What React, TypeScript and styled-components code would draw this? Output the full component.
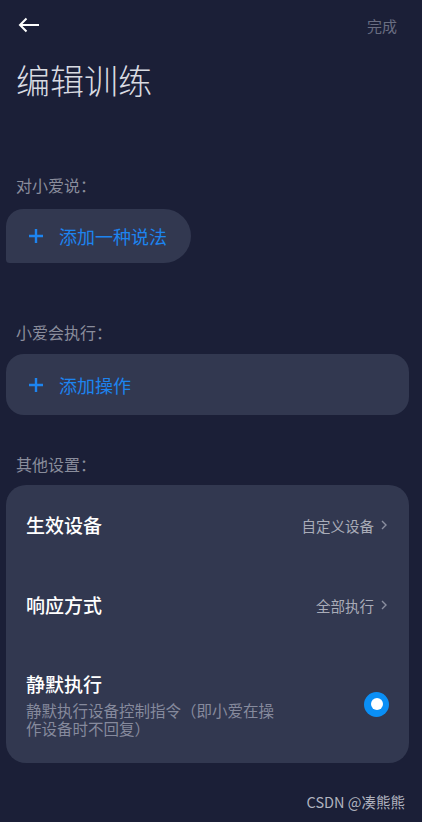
import styled, { createGlobalStyle } from "styled-components";

const GlobalStyle = createGlobalStyle`
    html, body {
        margin: 0;
        padding: 0;
        background: #1b1f37;
    }

    body {
        font-family: "Noto Sans CJK SC", "Noto Sans", "Liberation Sans", sans-serif;
    }
`;

const Page = styled.div`
    width: 422px;
    min-height: 822px;
    background: #1b1f37;
    box-sizing: border-box;
    padding: 0 13px 0 6px;
    display: flex;
    flex-direction: column;
`;

const TopBar = styled.div`
    height: 50px;
    display: flex;
    align-items: center;
    justify-content: space-between;
    padding: 0 12px 0 12px;
`;

const BackButton = styled.button`
    background: none;
    border: none;
    padding: 0;
    width: 24px;
    height: 24px;
    display: flex;
    align-items: center;
    cursor: pointer;
`;

const Done = styled.span`
    font-size: 15px;
    color: #6a6e82;
`;

const Title = styled.h1`
    margin: 8px 0 0 10px;
    font-size: 34px;
    font-weight: 300;
    line-height: 44px;
    color: #d9dbe2;
`;

const SectionLabel = styled.div<{ $top: number }>`
    margin: ${(p) => p.$top}px 0 0 10px;
    font-size: 16px;
    line-height: 22px;
    color: #8a8d9c;
`;

const AddPill = styled.button`
    align-self: flex-start;
    margin-top: 13px;
    height: 54px;
    padding: 0 24px 0 22px;
    display: flex;
    align-items: center;
    gap: 15px;
    background: #323850;
    border: none;
    border-radius: 18px 28px 28px 4px;
    cursor: pointer;
`;

const AddCard = styled.button`
    margin-top: 11px;
    height: 61px;
    padding: 0 22px;
    display: flex;
    align-items: center;
    gap: 15px;
    background: #323850;
    border: none;
    border-radius: 18px;
    cursor: pointer;
`;

const AddText = styled.span`
    font-family: "Noto Sans CJK SC", sans-serif;
    font-size: 18px;
    font-weight: 400;
    color: #1d84ef;
`;

const SettingsCard = styled.div`
    margin-top: 10px;
    background: #323850;
    border-radius: 20px;
    padding: 0 22px 0 20px;
    display: flex;
    flex-direction: column;
`;

const Row = styled.div<{ $height: number }>`
    height: ${(p) => p.$height}px;
    display: flex;
    align-items: center;
    justify-content: space-between;
`;

const RowTitle = styled.div`
    font-size: 19px;
    font-weight: 500;
    color: #ffffff;
    line-height: 24px;
`;

const RowValue = styled.div`
    display: flex;
    align-items: center;
    gap: 7px;
    font-size: 14.5px;
    color: #a9acb8;
`;

const TextBlock = styled.div`
    display: flex;
    flex-direction: column;
`;

const RowDesc = styled.div`
    width: 256px;
    margin-top: 5px;
    font-size: 15.5px;
    line-height: 18px;
    color: #868a9d;
`;

const Radio = styled.div`
    width: 25px;
    height: 25px;
    margin-right: -2px;
    border-radius: 50%;
    background: #0a8ff6;
    display: flex;
    align-items: center;
    justify-content: center;

    &::after {
        content: "";
        width: 12px;
        height: 12px;
        border-radius: 50%;
        background: #ffffff;
    }
`;

const Footer = styled.div`
    margin-top: 28px;
    text-align: right;
    font-size: 14.5px;
    color: #b0b3bf;
    padding-right: 4px;
`;

const Plus = () => (
    <svg width="16" height="16" viewBox="0 0 16 16">
        <path d="M8 1v14M1 8h14" stroke="#1d84ef" strokeWidth="2.4" />
    </svg>
);

const Chevron = () => (
    <svg width="6" height="12" viewBox="0 0 6 12">
        <path d="M1 2l4 4-4 4" stroke="#8a8e9f" strokeWidth="1.4" fill="none" />
    </svg>
);

export const EditTraining = () => {
    return (
        <Page>
            <GlobalStyle />
            <TopBar>
                <BackButton>
                    <svg width="22" height="16" viewBox="0 0 22 16">
                        <path
                            d="M21 8H2M8.5 1.5L2 8l6.5 6.5"
                            stroke="#ffffff"
                            strokeWidth="2"
                            fill="none"
                        />
                    </svg>
                </BackButton>
                <Done>完成</Done>
            </TopBar>

            <Title>编辑训练</Title>

            <SectionLabel $top={72}>对小爱说：</SectionLabel>
            <AddPill>
                <Plus />
                <AddText>添加一种说法</AddText>
            </AddPill>

            <SectionLabel $top={58}>小爱会执行：</SectionLabel>
            <AddCard>
                <Plus />
                <AddText>添加操作</AddText>
            </AddCard>

            <SectionLabel $top={38}>其他设置：</SectionLabel>
            <SettingsCard>
                <Row $height={80}>
                    <RowTitle>生效设备</RowTitle>
                    <RowValue>
                        自定义设备 <Chevron />
                    </RowValue>
                </Row>
                <Row $height={80}>
                    <RowTitle>响应方式</RowTitle>
                    <RowValue>
                        全部执行 <Chevron />
                    </RowValue>
                </Row>
                <Row $height={118}>
                    <TextBlock>
                        <RowTitle>静默执行</RowTitle>
                        <RowDesc>静默执行设备控制指令（即小爱在操作设备时不回复）</RowDesc>
                    </TextBlock>
                    <Radio />
                </Row>
            </SettingsCard>

            <Footer>CSDN @凑熊熊</Footer>
        </Page>
    );
};

export default EditTraining;
